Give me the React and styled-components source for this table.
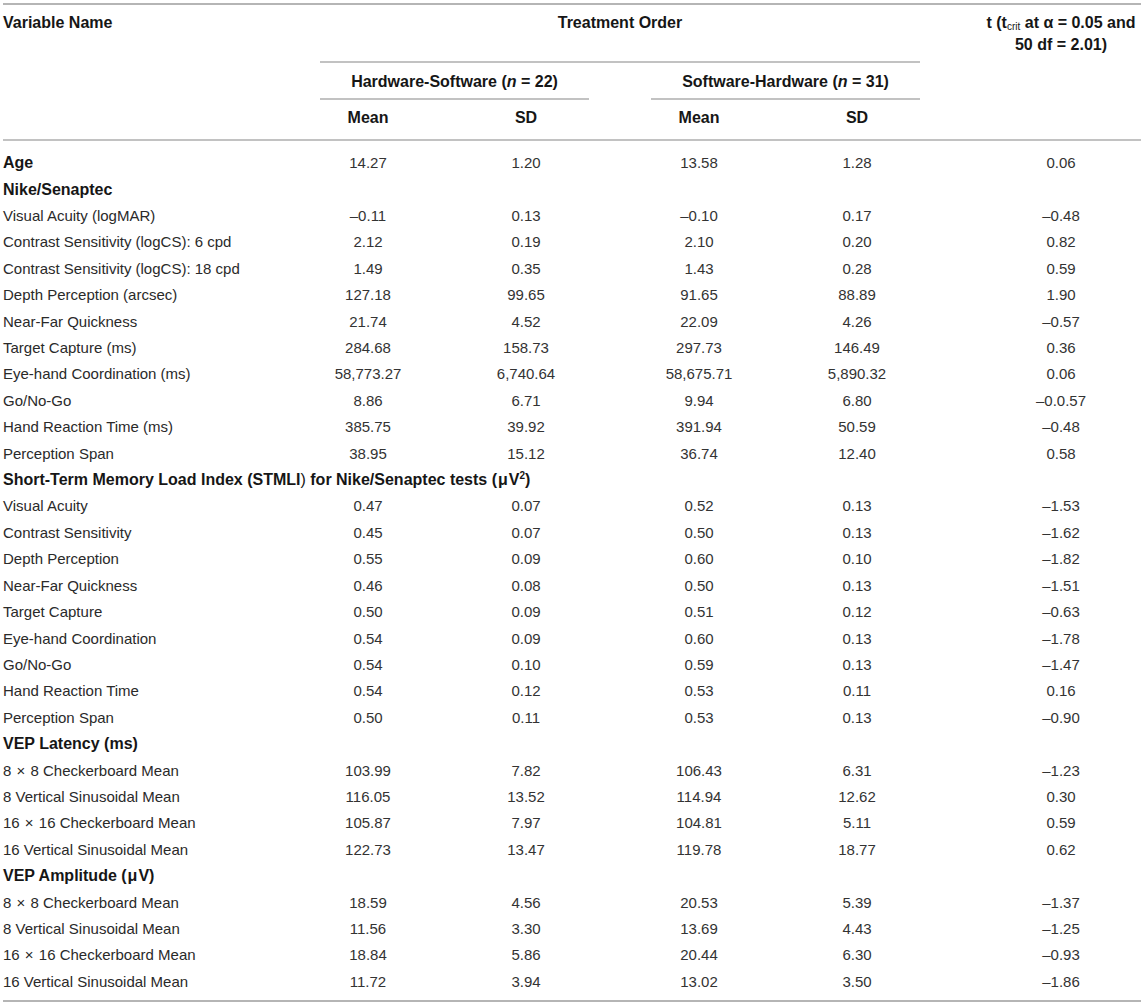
import styled, { createGlobalStyle } from "styled-components";

const COLS = "286px 158px 158px 15px 158px 158px 45px 160px";
// grid tracks: 1 label, 2 hw mean, 3 hw sd, 4 gap, 5 sw mean, 6 sw sd, 7 gap, 8 t
const VALUE_TRACKS = [2, 3, 5, 6, 8];

const GlobalStyle = createGlobalStyle`
  body {
    margin: 0;
    background: #ffffff;
    font-family: "Liberation Sans", Arial, Helvetica, sans-serif;
    font-size: 15px;
    color: #2a2a2a;
  }
`;

const Table = styled.div`
  width: 1138px;
  margin: 3px 0 0 3px;
  border-top: 2px solid #b5b5b5;
  border-bottom: 2px solid #b5b5b5;
`;

const Head = styled.div`
  display: grid;
  grid-template-columns: ${COLS};
  grid-template-rows: auto auto auto;
  border-bottom: 2px solid #c2c2c2;
  font-weight: bold;
  font-size: 16px;
  color: #161616;
  line-height: 22px;
`;

const VarHead = styled.div`
  grid-column: 1;
  grid-row: 1 / 4;
  padding-top: 7px;
`;

const TreatHead = styled.div`
  grid-column: 2 / 7;
  grid-row: 1;
  margin: 0 16px 0 31px;
  padding: 7px 0 27px;
  border-bottom: 2px solid #c2c2c2;
  text-align: center;
`;

const THead = styled.div`
  grid-column: 8;
  grid-row: 1 / 4;
  padding-top: 7px;
  text-align: center;

  sub {
    font-weight: normal;
    font-size: 10px;
    vertical-align: -2px;
    line-height: 0;
  }
`;

const GroupHead = styled.div`
  grid-column: ${(p) => p.$cols};
  grid-row: 2;
  margin: 0 16px 0 31px;
  padding: 8px 0 5px;
  border-bottom: 2px solid #c2c2c2;
  text-align: center;
`;

const SubHead = styled.div`
  grid-column: ${(p) => p.$col};
  grid-row: 3;
  padding: 7px 0 10px;
  text-align: center;
`;

const Body = styled.div`
  padding: 9px 0 5px;
`;

const Row = styled.div`
  display: grid;
  grid-template-columns: ${COLS};
  align-items: center;
  height: 26.42px;
  line-height: 20px;
`;

const Label = styled.div`
  grid-column: ${(p) => (p.$heading ? "1 / -1" : "1")};
  white-space: nowrap;
  font-weight: ${(p) => (p.$bold ? "bold" : "normal")};
  font-size: ${(p) => (p.$bold ? "16px" : "15px")};
  color: ${(p) => (p.$bold ? "#161616" : "#2a2a2a")};
`;

const Num = styled.div`
  grid-column: ${(p) => p.$col};
  text-align: center;
  color: #333333;
`;

const Plain = styled.span`
  font-weight: normal;
`;

const Sup = styled.sup`
  font-size: 10px;
  line-height: 0;
`;

const Times = styled.span`
  margin: 0 1px;
`;

const Mu = styled.span`
  margin: 0 1px;
`;

const grid = (a) => (
  <>
    {a} <Times>×</Times> {a} Checkerboard Mean
  </>
);

const rows = [
  { label: "Age", bold: true, v: ["14.27", "1.20", "13.58", "1.28", "0.06"] },
  { label: "Nike/Senaptec", heading: true },
  { label: "Visual Acuity (logMAR)", v: ["–0.11", "0.13", "–0.10", "0.17", "–0.48"] },
  { label: "Contrast Sensitivity (logCS): 6 cpd", v: ["2.12", "0.19", "2.10", "0.20", "0.82"] },
  { label: "Contrast Sensitivity (logCS): 18 cpd", v: ["1.49", "0.35", "1.43", "0.28", "0.59"] },
  { label: "Depth Perception (arcsec)", v: ["127.18", "99.65", "91.65", "88.89", "1.90"] },
  { label: "Near-Far Quickness", v: ["21.74", "4.52", "22.09", "4.26", "–0.57"] },
  { label: "Target Capture (ms)", v: ["284.68", "158.73", "297.73", "146.49", "0.36"] },
  { label: "Eye-hand Coordination (ms)", v: ["58,773.27", "6,740.64", "58,675.71", "5,890.32", "0.06"] },
  { label: "Go/No-Go", v: ["8.86", "6.71", "9.94", "6.80", "–0.0.57"] },
  { label: "Hand Reaction Time (ms)", v: ["385.75", "39.92", "391.94", "50.59", "–0.48"] },
  { label: "Perception Span", v: ["38.95", "15.12", "36.74", "12.40", "0.58"] },
  {
    label: (
      <>
        Short-Term Memory Load Index (STMLI<Plain>)</Plain> for Nike/Senaptec tests (<Mu>μ</Mu>V
        <Sup>2</Sup>)
      </>
    ),
    heading: true,
  },
  { label: "Visual Acuity", v: ["0.47", "0.07", "0.52", "0.13", "–1.53"] },
  { label: "Contrast Sensitivity", v: ["0.45", "0.07", "0.50", "0.13", "–1.62"] },
  { label: "Depth Perception", v: ["0.55", "0.09", "0.60", "0.10", "–1.82"] },
  { label: "Near-Far Quickness", v: ["0.46", "0.08", "0.50", "0.13", "–1.51"] },
  { label: "Target Capture", v: ["0.50", "0.09", "0.51", "0.12", "–0.63"] },
  { label: "Eye-hand Coordination", v: ["0.54", "0.09", "0.60", "0.13", "–1.78"] },
  { label: "Go/No-Go", v: ["0.54", "0.10", "0.59", "0.13", "–1.47"] },
  { label: "Hand Reaction Time", v: ["0.54", "0.12", "0.53", "0.11", "0.16"] },
  { label: "Perception Span", v: ["0.50", "0.11", "0.53", "0.13", "–0.90"] },
  { label: "VEP Latency (ms)", heading: true },
  { label: grid(8), v: ["103.99", "7.82", "106.43", "6.31", "–1.23"] },
  { label: "8 Vertical Sinusoidal Mean", v: ["116.05", "13.52", "114.94", "12.62", "0.30"] },
  { label: grid(16), v: ["105.87", "7.97", "104.81", "5.11", "0.59"] },
  { label: "16 Vertical Sinusoidal Mean", v: ["122.73", "13.47", "119.78", "18.77", "0.62"] },
  {
    label: (
      <>
        VEP Amplitude (<Mu>μ</Mu>V)
      </>
    ),
    heading: true,
  },
  { label: grid(8), v: ["18.59", "4.56", "20.53", "5.39", "–1.37"] },
  { label: "8 Vertical Sinusoidal Mean", v: ["11.56", "3.30", "13.69", "4.43", "–1.25"] },
  { label: grid(16), v: ["18.84", "5.86", "20.44", "6.30", "–0.93"] },
  { label: "16 Vertical Sinusoidal Mean", v: ["11.72", "3.94", "13.02", "3.50", "–1.86"] },
];

const App = () => {
  return (
    <>
      <GlobalStyle />
      <Table>
        <Head>
          <VarHead>Variable Name</VarHead>
          <TreatHead>Treatment Order</TreatHead>
          <THead>
            t (t<sub>crit</sub> at α = 0.05 and
            <br />
            50 df = 2.01)
          </THead>
          <GroupHead $cols="2 / 4">
            Hardware-Software (<i>n</i> = 22)
          </GroupHead>
          <GroupHead $cols="5 / 7">
            Software-Hardware (<i>n</i> = 31)
          </GroupHead>
          <SubHead $col={2}>Mean</SubHead>
          <SubHead $col={3}>SD</SubHead>
          <SubHead $col={5}>Mean</SubHead>
          <SubHead $col={6}>SD</SubHead>
        </Head>
        <Body>
          {rows.map((r, i) => (
            <Row key={i}>
              <Label $bold={r.bold || r.heading} $heading={r.heading}>
                {r.label}
              </Label>
              {r.v &&
                r.v.map((val, j) => (
                  <Num key={j} $col={VALUE_TRACKS[j]}>
                    {val}
                  </Num>
                ))}
            </Row>
          ))}
        </Body>
      </Table>
    </>
  );
};

export default App;
